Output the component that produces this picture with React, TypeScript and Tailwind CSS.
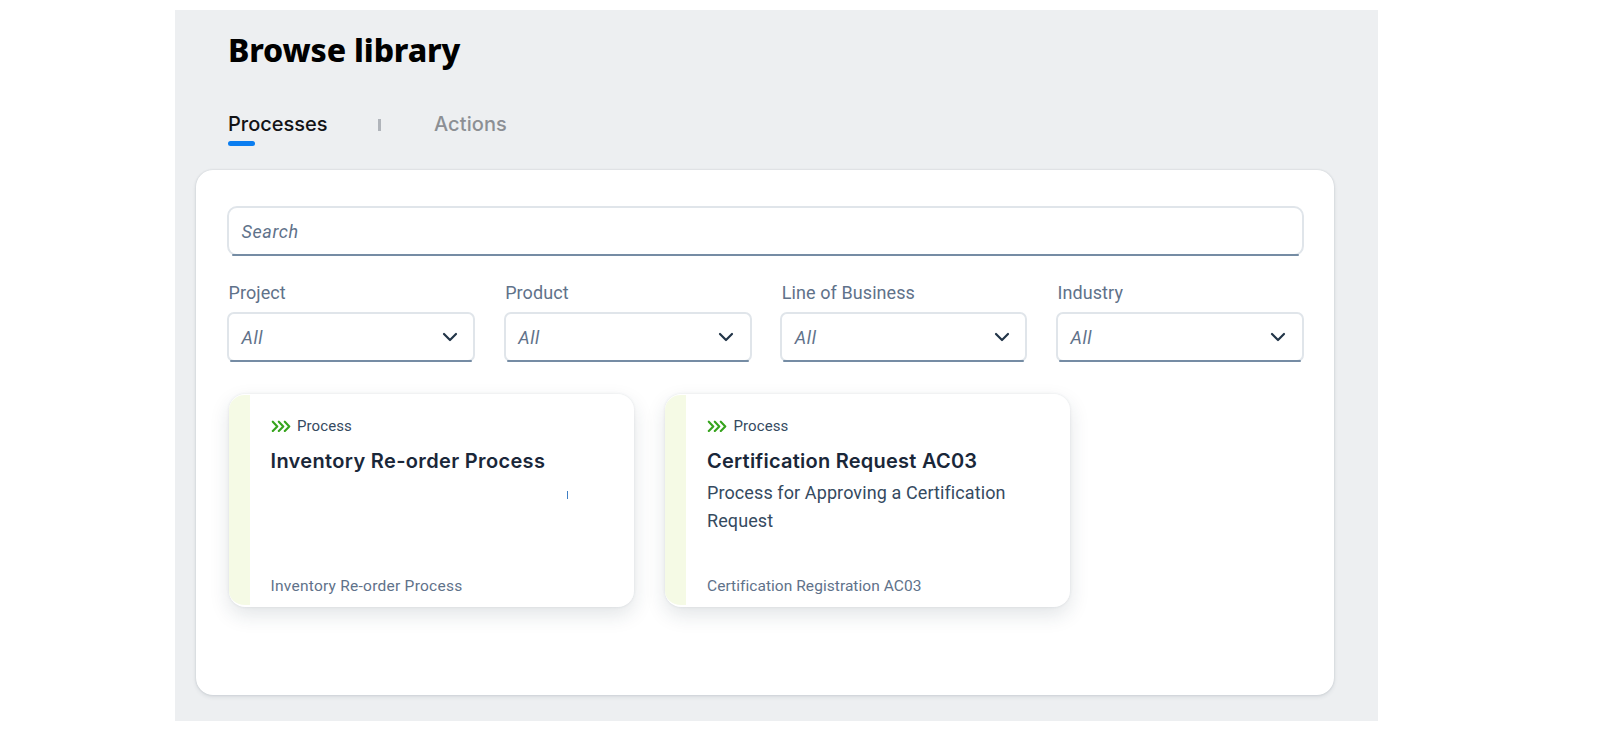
function Chevron() {
  return (
    <svg className="h-[10px] w-[16px]" viewBox="0 0 16 10" fill="none" stroke="#223548" strokeWidth="2.2" strokeLinecap="round" strokeLinejoin="round">
      <path d="M2 2 L8 8 L14 2" />
    </svg>
  );
}

function ProcessIcon() {
  return (
    <svg className="h-[12px] w-[20px]" viewBox="0 0 20 12" fill="none" stroke="#36a41d" strokeWidth="2.1" strokeLinecap="round" strokeLinejoin="round">
      <path d="M1.8 1.7 L6.3 6.5 L1.8 11.1" />
      <path d="M7.8 1.7 L12.3 6.5 L7.8 11.1" />
      <path d="M13.8 1.7 L18.3 6.5 L13.8 11.1" />
    </svg>
  );
}

function Filter({ label, width }: { label: string; width: string }) {
  return (
    <div className={width}>
      <div className="h-[34px] pt-[4px] pl-[1.5px] text-[18px] leading-[34px] tracking-[0.08px] text-[#5f728a]">{label}</div>
      <div className="relative mt-[6px] h-[50px] rounded-[7px] border-2 border-[#e0e5ea] bg-white after:absolute after:inset-x-px after:-bottom-[2px] after:h-[2px] after:rounded-full after:bg-[#758ca4]">
        <div className="flex h-full items-center justify-between pr-[15.5px] pl-[12.5px]">
          <span className="text-[18px] tracking-[0.6px] text-[#5f728a] italic">All</span>
          <Chevron />
        </div>
      </div>
    </div>
  );
}

function Card({ title, description, footer, footerTracking, titleTracking }: { title: string; description?: string; footer: string; footerTracking: string; titleTracking: string }) {
  return (
    <article className="flex h-[213px] w-[405px] overflow-hidden rounded-[16px] border-t border-b-2 border-white bg-white shadow-[0_0_3px_rgba(34,53,72,0.1),0_8px_20px_rgba(34,53,72,0.13)]">
      <div className="w-[21px] shrink-0 bg-[#f5fae5]" />
      <div className="flex flex-1 flex-col pt-[20px] pr-[20px] pl-[21px]">
        <div className="flex h-[22px] items-center gap-[6.5px]">
          <ProcessIcon />
          <span className="text-[15px] tracking-[0.1px] text-[#354a5f]">Process</span>
        </div>
        <h2 className={"mt-[9px] font-[Inter] text-[20px] leading-[30px] font-semibold whitespace-nowrap text-[#1a2739] " + titleTracking}>{title}</h2>
        {description ? (
          <p className="mt-[3px] text-[18px] leading-[28px] tracking-[0.1px] text-[#354a5f]">{description}</p>
        ) : (
          <div className="mt-[15px] ml-[296px] h-[8px] w-px bg-[#3f7fc4]" />
        )}
        <div className={"mt-auto mb-[8px] text-[15.5px] leading-[22px] text-[#5f728a] " + footerTracking}>{footer}</div>
      </div>
    </article>
  );
}

export default function App() {
  return (
    <div className="h-[731px] bg-white pt-[10px] pl-[175px] font-[Roboto,sans-serif]">
      <main className="h-[711px] w-[1203px] bg-[#edeff1] pr-[44px] pl-[21px]">
        <header className="h-[160px] pl-[32px]">
          <h1 className="pt-[18px] font-['Noto_Sans'] text-[32px] leading-[44px] font-extrabold tracking-[-0.15px] text-black">Browse library</h1>
          <nav className="mt-[37px] flex h-[30px] items-center font-[Inter] text-[20px] font-medium">
            <div className="w-[150px] text-[#131316]">Processes</div>
            <div className="mt-[2px] h-[12px] w-[3px] bg-[#b0b4ba]" />
            <div className="ml-[53px] tracking-[0.1px] text-[#8c8f94]">Actions</div>
          </nav>
          <div className="mt-[1.5px] h-[5.5px] w-[27px] rounded-full bg-[#0a7df0]" />
        </header>
        <section className="h-[525px] rounded-[17px] bg-white pt-[36px] pr-[30px] pl-[31px] shadow-[0_0_2px_rgba(34,53,72,0.18),0_2px_4px_rgba(34,53,72,0.1)]">
          <div className="relative flex h-[50px] items-center rounded-[10px] border-2 border-[#e0e5ea] pt-px pl-[12.5px] text-[18px] tracking-[0.6px] text-[#5f728a] italic after:absolute after:inset-x-[3px] after:-bottom-[2px] after:h-[2px] after:rounded-full after:bg-[#758ca4]">
            Search
          </div>
          <div className="mt-[16px] flex justify-between">
            <Filter label="Project" width="w-[248px]" />
            <Filter label="Product" width="w-[248px]" />
            <Filter label="Line of Business" width="w-[247px]" />
            <Filter label="Industry" width="w-[248px]" />
          </div>
          <div className="mt-[32px] ml-[1.5px] flex gap-[31.5px]">
            <Card title="Inventory Re-order Process" footer="Inventory Re-order Process" titleTracking="tracking-[0.34px]" footerTracking="tracking-[0.25px]" />
            <Card title="Certification Request AC03" description="Process for Approving a Certification Request" footer="Certification Registration AC03" titleTracking="tracking-[0.24px]" footerTracking="tracking-[0.05px]" />
          </div>
        </section>
      </main>
    </div>
  );
}
